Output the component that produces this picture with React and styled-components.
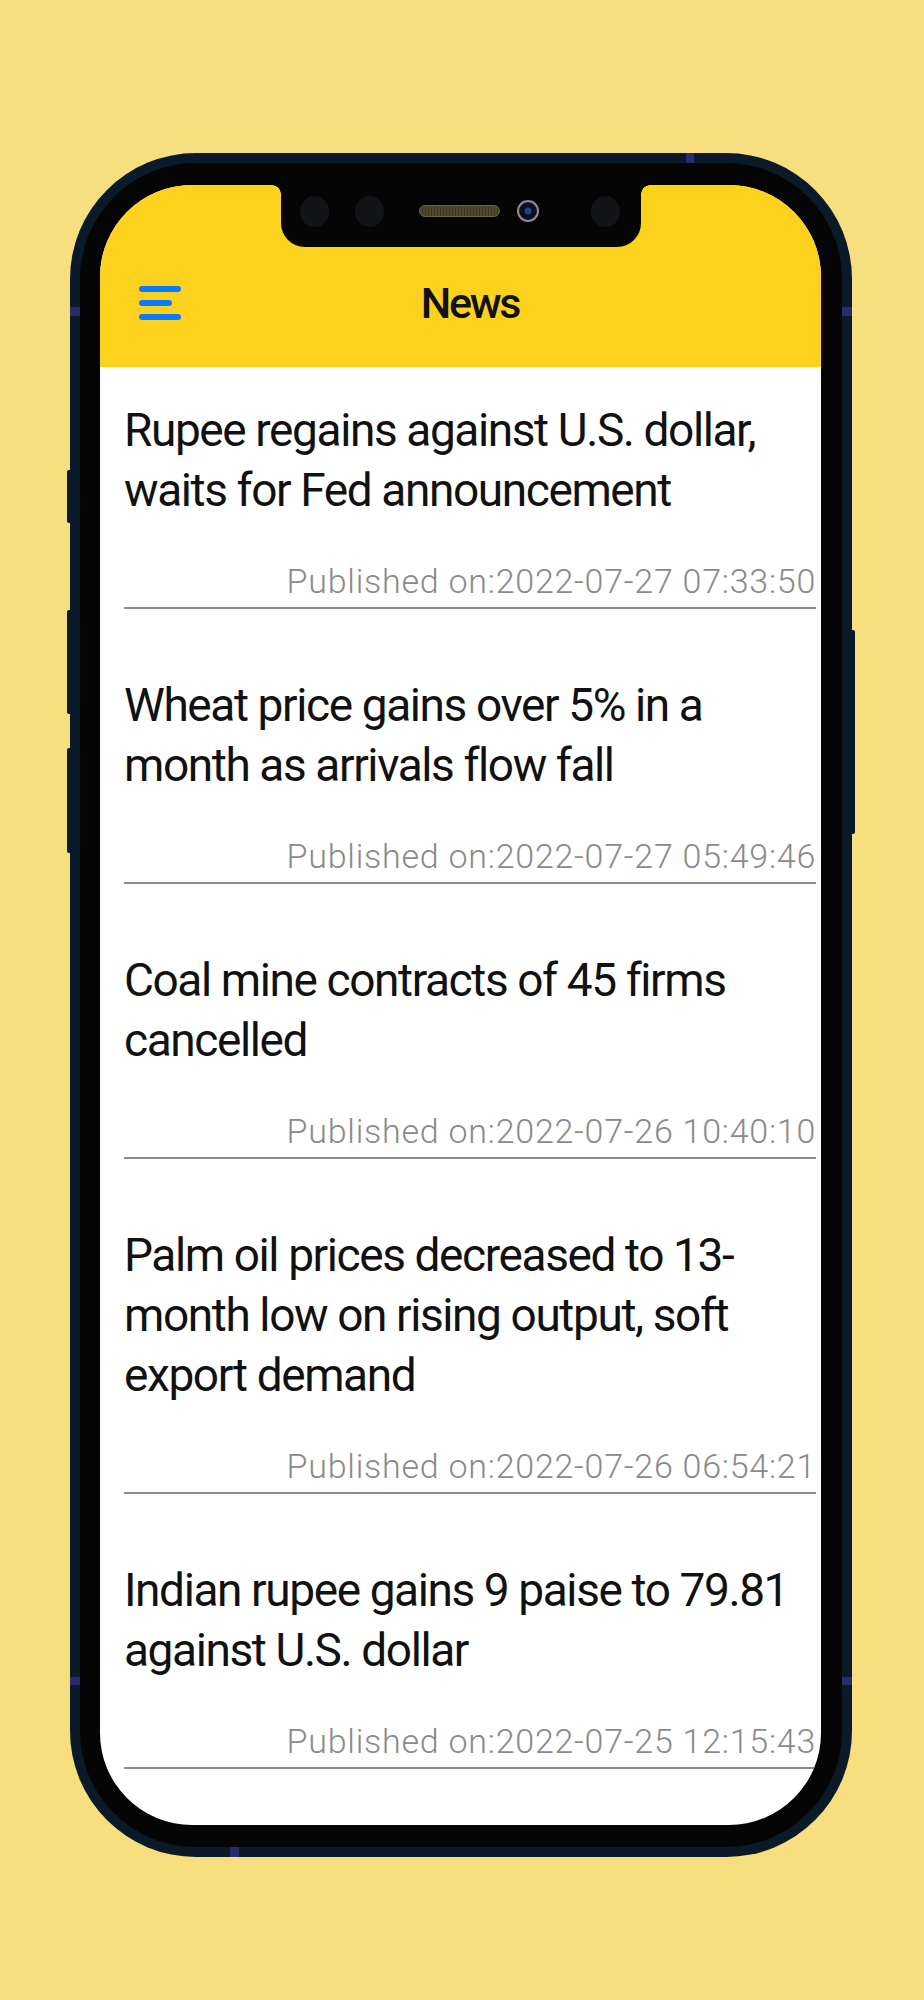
import React from "react";
import styled, { createGlobalStyle } from "styled-components";

const GlobalStyle = createGlobalStyle`
  html, body {
    margin: 0;
    padding: 0;
    background: #f7df80;
  }
  body {
    font-family: Roboto, "Liberation Sans", Arial, sans-serif;
  }
`;

const NEWS = [
  {
    id: 1,
    title: "Rupee regains against U.S. dollar, waits for Fed announcement",
    date: "2022-07-27 07:33:50",
  },
  {
    id: 2,
    title: "Wheat price gains over 5% in a month as arrivals flow fall",
    date: "2022-07-27 05:49:46",
  },
  {
    id: 3,
    title: "Coal mine contracts of 45 firms cancelled",
    date: "2022-07-26 10:40:10",
  },
  {
    id: 4,
    title:
      "Palm oil prices decreased to 13-month low on rising output, soft export demand",
    date: "2022-07-26 06:54:21",
  },
  {
    id: 5,
    title: "Indian rupee gains 9 paise to 79.81 against U.S. dollar",
    date: "2022-07-25 12:15:43",
  },
];

const App = () => {
  return (
    <>
      <GlobalStyle />
      <Page>
        <Phone>
          <LeftRail>
            <SideKey $height={53} $mute />
            <SideKey $height={104} />
            <SideKey $height={105} />
          </LeftRail>
          <RightRail>
            <SideKey $height={204} />
          </RightRail>

          <Bezel>
            <Screen>
              <Notch>
                <SensorPair>
                  <Sensor />
                  <Sensor />
                </SensorPair>
                <Earpiece>
                  <Speaker />
                  <Camera />
                </Earpiece>
                <Sensor $end />
              </Notch>

              <Header>
                <MenuButton aria-label="menu">
                  <Bar />
                  <Bar $short />
                  <Bar />
                </MenuButton>
                <Title>News</Title>
              </Header>

              <List>
                {NEWS.map((item) => (
                  <Item key={item.id}>
                    <Headline>{item.title}</Headline>
                    <Published>Published on:{item.date}</Published>
                  </Item>
                ))}
              </List>
            </Screen>
          </Bezel>
        </Phone>
      </Page>
    </>
  );
};

export default App;

let Page = styled.div`
  width: 924px;
  height: 2000px;
  box-sizing: border-box;
  padding: 153px 0 0 70px;
`;

/* antenna bands are painted into the frame background */
let Phone = styled.div`
  position: relative;
  width: 782px;
  height: 1704px;
  box-sizing: border-box;
  padding: 10px;
  border-radius: 126px;
  background:
    linear-gradient(#2b2a6c, #2b2a6c) 616px 0 / 8px 10px no-repeat,
    linear-gradient(#2b2a6c, #2b2a6c) 0 154px / 10px 9px no-repeat,
    linear-gradient(#2b2a6c, #2b2a6c) 100% 154px / 10px 9px no-repeat,
    linear-gradient(#2b2a6c, #2b2a6c) 0 1524px / 10px 8px no-repeat,
    linear-gradient(#2b2a6c, #2b2a6c) 100% 1524px / 10px 8px no-repeat,
    linear-gradient(#2b2a6c, #2b2a6c) 160px 100% / 9px 10px no-repeat,
    #0b1a28;
`;

let LeftRail = styled.div`
  position: absolute;
  top: 317px;
  left: -3px;
  display: flex;
  flex-direction: column;
  gap: 34px;
`;

let RightRail = styled.div`
  position: absolute;
  top: 477px;
  right: -3px;
  display: flex;
`;

let SideKey = styled.span`
  display: block;
  width: 6px;
  height: ${(p) => p.$height}px;
  margin-bottom: ${(p) => (p.$mute ? 53 : 0)}px;
  background: #0b1a28;
  border-radius: 2px;
`;

let Bezel = styled.div`
  height: 100%;
  box-sizing: border-box;
  padding: 22px 21px 22px 20px;
  background: #050505;
  border-radius: 116px;
`;

let Screen = styled.div`
  position: relative;
  height: 100%;
  background: #ffffff;
  border-radius: 92px;
  overflow: hidden;
`;

let Notch = styled.div`
  position: absolute;
  top: 0;
  left: 181px;
  width: 360px;
  height: 62px;
  box-sizing: border-box;
  padding: 0 21px 10px 19px;
  display: flex;
  align-items: center;
  gap: 35px;
  background: #050505;
  border-radius: 0 0 24px 24px;

  &::before,
  &::after {
    content: "";
    position: absolute;
    top: 0;
    width: 9px;
    height: 9px;
  }
  &::before {
    left: -9px;
    background: radial-gradient(circle at 0 100%, transparent 8.5px, #050505 9px);
  }
  &::after {
    right: -9px;
    background: radial-gradient(circle at 100% 100%, transparent 8.5px, #050505 9px);
  }
`;

let SensorPair = styled.div`
  display: flex;
  gap: 26px;
`;

let Sensor = styled.span`
  flex: none;
  width: 29px;
  height: 31px;
  border-radius: 50%;
  background: #121316;
  margin-left: ${(p) => (p.$end ? "auto" : "0")};
`;

let Earpiece = styled.div`
  display: flex;
  align-items: center;
  gap: 17px;
`;

let Speaker = styled.span`
  flex: none;
  width: 81px;
  height: 12px;
  box-sizing: border-box;
  border-radius: 6px;
  border: 1px solid #6d6445;
  background: repeating-linear-gradient(90deg, #4f4830 0 2px, #3e3924 2px 3px);
`;

let Camera = styled.span`
  flex: none;
  width: 22px;
  height: 22px;
  box-sizing: border-box;
  border-radius: 50%;
  border: 2px solid #8d8d92;
  background: radial-gradient(circle, #22407e 0 3px, #0b1124 4px);
`;

let Header = styled.header`
  height: 182px;
  box-sizing: border-box;
  padding: 0 62px 40px 39px;
  display: flex;
  align-items: flex-end;
  background: #fdd21f;
`;

let MenuButton = styled.button`
  flex: none;
  width: 42px;
  height: 48px;
  padding: 0;
  border: 0;
  background: transparent;
  display: flex;
  flex-direction: column;
  justify-content: center;
  gap: 8px;
  cursor: pointer;
`;

let Bar = styled.span`
  display: block;
  width: ${(p) => (p.$short ? 33 : 42)}px;
  height: 6px;
  border-radius: 3px;
  background: #0a7bff;
`;

let Title = styled.h1`
  flex: 1;
  margin: 0;
  text-align: center;
  font-size: 43px;
  font-weight: 500;
  line-height: 48px;
  letter-spacing: -2.3px;
  color: #111111;
`;

let List = styled.ul`
  list-style: none;
  margin: 0;
  padding: 0 5px 0 24px;
`;

let Item = styled.li`
  padding: 66px 0 7px;
  border-bottom: 2px solid #8b8b8b;

  &:first-child {
    padding-top: 33px;
  }
`;

let Headline = styled.h2`
  margin: 0;
  font-size: 46px;
  font-weight: 400;
  line-height: 60px;
  letter-spacing: -1.4px;
  color: #111111;
`;

let Published = styled.p`
  margin: 42px 0 0;
  text-align: right;
  font-size: 34px;
  font-weight: 300;
  line-height: 38px;
  letter-spacing: 0.75px;
  color: #8a8a8a;
`;
